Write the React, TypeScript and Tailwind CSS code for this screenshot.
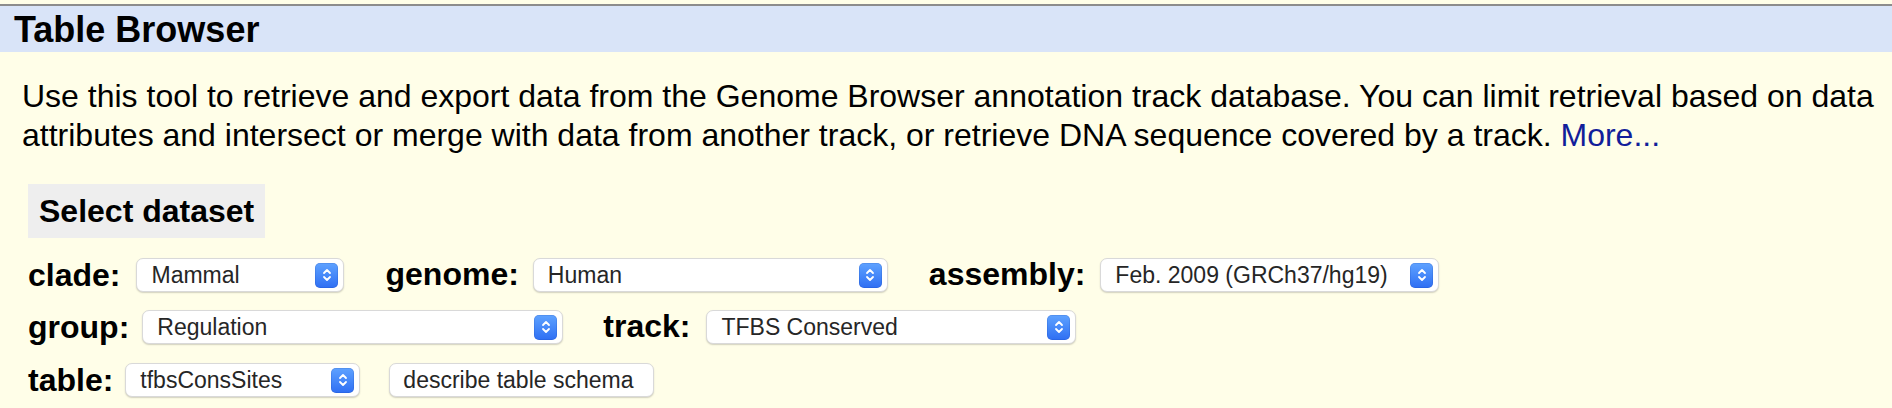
import React from "react";

function Stepper() {
  return (
    <div className="flex h-[25px] w-[23px] items-center justify-center rounded-[5px] bg-gradient-to-b from-[#5fa2ff] to-[#2f6ef3] shadow-[inset_0_0_0_0.5px_rgba(0,40,140,0.25)]">
      <svg width="10" height="16" viewBox="0 0 10 16" fill="none">
        <path d="M2 6 L5 3 L8 6" stroke="white" strokeWidth="1.8" strokeLinecap="round" strokeLinejoin="round" />
        <path d="M2 10 L5 13 L8 10" stroke="white" strokeWidth="1.8" strokeLinecap="round" strokeLinejoin="round" />
      </svg>
    </div>
  );
}

function FakeSelect({ value, className }: { value: string; className: string }) {
  return (
    <div
      className={
        "flex h-[34px] shrink-0 items-center justify-between rounded-[7px] border border-[#d9d9d9] bg-white pl-[14px] pr-[5px] shadow-[0_1px_1.5px_rgba(0,0,0,0.18)] " +
        className
      }
    >
      <span className="whitespace-nowrap text-[23px] leading-none text-[#262626]">{value}</span>
      <Stepper />
    </div>
  );
}

function Label({ children }: { children: React.ReactNode }) {
  return (
    <span className="shrink-0 whitespace-nowrap text-[32px] font-bold leading-none text-black">{children}</span>
  );
}

export default function App() {
  return (
    <div className="min-h-[408px] w-[1892px] bg-[#fffee8] [font-family:'Liberation_Sans',Arial,sans-serif] text-black">
      <div className="h-[4px] bg-[#fffee8]" />
      <div className="h-[2px] bg-[#8c8c8c]" />
      <div className="flex h-[46px] items-center bg-[#d9e4f8] pl-[14px] pt-[1px]">
        <h1 className="whitespace-nowrap text-[36px] font-bold leading-none">Table Browser</h1>
      </div>

      <p className="mt-[25px] pl-[22px] pr-[10px] text-[32px] leading-[38.5px]">
        Use this tool to retrieve and export data from the Genome Browser annotation track database. You can limit
        retrieval based on data attributes and intersect or merge with data from another track, or retrieve DNA sequence
        covered by a track. <span className="text-[#121e9a]">More...</span>
      </p>

      <div className="pl-[28px]">
        <div className="mt-[30px] flex h-[54px] w-fit items-center bg-[#eeeeee] px-[11px]">
          <span className="whitespace-nowrap text-[32px] font-bold leading-none">Select dataset</span>
        </div>

        <div className="mt-[20px] flex h-[34px] items-center">
          <Label>clade:</Label>
          <FakeSelect value="Mammal" className="ml-[16px] w-[208px]" />
          <div className="ml-[41px]">
            <Label>genome:</Label>
          </div>
          <FakeSelect value="Human" className="ml-[14px] w-[355px]" />
          <div className="ml-[41px]">
            <Label>assembly:</Label>
          </div>
          <FakeSelect value="Feb. 2009 (GRCh37/hg19)" className="ml-[15px] w-[339px]" />
        </div>

        <div className="mt-[18px] flex h-[34px] items-center">
          <Label>group:</Label>
          <FakeSelect value="Regulation" className="ml-[13px] w-[421px]" />
          <div className="ml-[40px]">
            <Label>track:</Label>
          </div>
          <FakeSelect value="TFBS Conserved" className="ml-[16px] w-[370px]" />
        </div>

        <div className="mt-[19px] flex h-[34px] items-center">
          <Label>table:</Label>
          <FakeSelect value="tfbsConsSites" className="ml-[12px] w-[235px]" />
          <div className="ml-[29px] flex h-[34px] w-[265px] items-center rounded-[7px] border border-[#d9d9d9] bg-white pl-[13px] shadow-[0_1px_1.5px_rgba(0,0,0,0.18)]">
            <span className="whitespace-nowrap text-[23px] leading-none text-[#262626]">describe table schema</span>
          </div>
        </div>
      </div>
    </div>
  );
}
